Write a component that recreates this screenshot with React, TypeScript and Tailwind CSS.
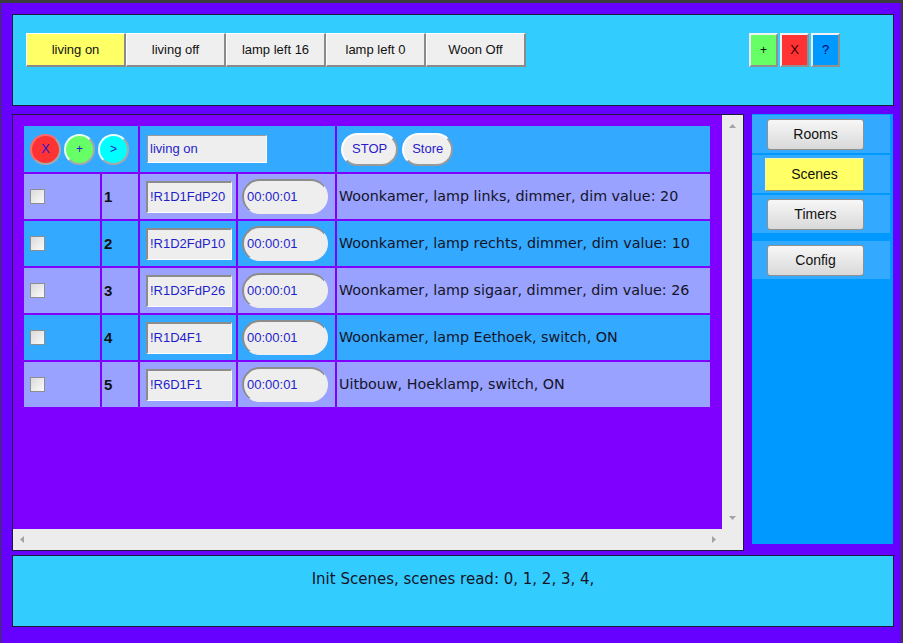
import React from "react";

const topButtons = [
  { label: "living on", active: true },
  { label: "living off", active: false },
  { label: "lamp left 16", active: false },
  { label: "lamp left 0", active: false },
  { label: "Woon Off", active: false },
];

const steps = [
  { nr: 1, code: "!R1D1FdP20", time: "00:00:01", text: "Woonkamer, lamp links, dimmer, dim value: 20" },
  { nr: 2, code: "!R1D2FdP10", time: "00:00:01", text: "Woonkamer, lamp rechts, dimmer, dim value: 10" },
  { nr: 3, code: "!R1D3FdP26", time: "00:00:01", text: "Woonkamer, lamp sigaar, dimmer, dim value: 26" },
  { nr: 4, code: "!R1D4F1", time: "00:00:01", text: "Woonkamer, lamp Eethoek, switch, ON" },
  { nr: 5, code: "!R6D1F1", time: "00:00:01", text: "Uitbouw, Hoeklamp, switch, ON" },
];

const arial = "font-['Liberation_Sans',Arial,sans-serif]";
const comic = "font-['DejaVu_Sans',sans-serif]";

const Arrow = ({ dir }: { dir: "up" | "down" | "left" | "right" }) => {
  const pts = {
    up: "0,4 3.5,0 7,4",
    down: "0,0 3.5,4 7,0",
    left: "4,0 0,3.5 4,7",
    right: "0,0 4,3.5 0,7",
  }[dir];
  const vertical = dir === "up" || dir === "down";
  return (
    <svg width={vertical ? 7 : 4} height={vertical ? 4 : 7} viewBox={vertical ? "0 0 7 4" : "0 0 4 7"}>
      <polygon points={pts} fill="#a3a3a3" />
    </svg>
  );
};

const SideButton = ({ label, active }: { label: string; active?: boolean }) =>
  active ? (
    <div className="w-[99px] h-[33px] flex items-center justify-center bg-[#ffff66] border-t border-l border-[#f4f4c0] border-b border-r border-b-[#9a9a60] border-r-[#9a9a60] text-[14px] text-[#111]">
      {label}
    </div>
  ) : (
    <div className="w-[97px] h-[31px] flex items-center justify-center rounded-[3px] border border-[#8f8f8f] bg-linear-to-b from-[#f7f7f7] to-[#d9d9d9] text-[14px] text-[#111]">
      {label}
    </div>
  );

export default function App() {
  return (
    <div className={`w-[903px] h-[643px] overflow-hidden bg-[#6600ff] border-t-[3px] border-l border-r-2 border-[#3c3c3c] pl-[11px] pt-[11px] ${arial}`}>
      {/* Top bar */}
      <div className="w-[882px] h-[92px] bg-[#33ccff] border border-[#1c1c3c] flex items-start pt-[18px] pl-[13px] pr-[53px]">
        <div className="flex">
          {topButtons.map((b) => (
            <div
              key={b.label}
              className={`w-[100px] h-[34px] flex items-center justify-center text-[13px] text-[#111] border-t border-l border-white border-b-2 border-r-2 border-b-[#8a8a8a] border-r-[#8a8a8a] ${
                b.active ? "bg-[#ffff66]" : "bg-[#efefef]"
              }`}
            >
              {b.label}
            </div>
          ))}
        </div>
        <div className="ml-auto flex gap-[2px]">
          <div className="w-[29px] h-[34px] flex items-center justify-center bg-[#66ff66] text-[12px] text-[#111] border-t-2 border-l-2 border-[#f2f2f2] border-b-2 border-r-2 border-b-[#909090] border-r-[#909090]">
            +
          </div>
          <div className="w-[29px] h-[34px] flex items-center justify-center bg-[#ff3333] text-[13px] text-[#3a0000] border-t-2 border-l-2 border-[#f2f2f2] border-b-2 border-r-2 border-b-[#909090] border-r-[#909090]">
            X
          </div>
          <div className="w-[29px] h-[34px] flex items-center justify-center bg-[#0099ff] text-[13px] text-[#000066] border-t-2 border-l-2 border-[#f2f2f2] border-b-2 border-r-2 border-b-[#909090] border-r-[#909090]">
            ?
          </div>
        </div>
      </div>

      {/* Middle */}
      <div className="mt-[8px] flex gap-[8px] items-start">
        <div className="w-[732px] h-[437px] border border-[#1c1c3c] flex flex-col">
          <div className="flex h-[414px]">
            <div className="w-[709px] bg-[#7f00ff] p-[11px]">
              <div className="grid grid-cols-[76px_36px_96px_97px_373px] gap-[2px]">
                {/* header row */}
                <div className="col-span-2 h-[46px] bg-[#33aaff] flex items-center pl-[6px] gap-[3px]">
                  <div className="w-[31px] h-[31px] rounded-full bg-[#ff3333] flex items-center justify-center text-[13px] text-[#2a1acc] border-t-2 border-l-2 border-[#ff6a6a] border-b-2 border-r-2 border-b-[#a8a8a8] border-r-[#a8a8a8]">
                    X
                  </div>
                  <div className="w-[31px] h-[31px] rounded-full bg-[#66ff66] flex items-center justify-center text-[12px] text-[#2a1acc] border-t-2 border-l-2 border-[#eaffea] border-b-2 border-r-2 border-b-[#a8a8a8] border-r-[#a8a8a8]">
                    +
                  </div>
                  <div className="w-[31px] h-[31px] rounded-full bg-[#00ffff] flex items-center justify-center text-[12px] text-[#2a1acc] border-t-2 border-l-2 border-[#eaffff] border-b-2 border-r-2 border-b-[#a8a8a8] border-r-[#a8a8a8]">
                    &gt;
                  </div>
                </div>
                <div className="col-span-2 bg-[#33aaff] flex items-center pl-[7px]">
                  <div className="w-[120px] h-[28px] bg-[#eeeeee] flex items-center pl-[2px] text-[13px] text-[#1f1fcc] border-t border-l border-[#9a9a9a] border-b border-r border-b-white border-r-white">
                    living on
                  </div>
                </div>
                <div className="bg-[#33aaff] flex items-center pl-[4px] gap-[4px]">
                  <div className="h-[33px] px-[9px] rounded-full bg-[#efefef] flex items-center text-[13px] text-[#2a1acc] border-t-2 border-l-2 border-white border-b-2 border-r-2 border-b-[#9a9a9a] border-r-[#9a9a9a]">
                    STOP
                  </div>
                  <div className="h-[33px] px-[8px] rounded-full bg-[#efefef] flex items-center text-[13px] text-[#2a1acc] border-t-2 border-l-2 border-white border-b-2 border-r-2 border-b-[#9a9a9a] border-r-[#9a9a9a]">
                    Store
                  </div>
                </div>

                {steps.map((s, i) => {
                  const bg = i % 2 === 0 ? "bg-[#9aa2ff]" : "bg-[#33aaff]";
                  return (
                    <React.Fragment key={s.nr}>
                      <div className={`h-[45px] ${bg} flex items-center pl-[6px]`}>
                        <div className="w-[15px] h-[15px] border border-[#8e8e8e] bg-linear-to-br from-[#dadada] to-[#fbfbfb]" />
                      </div>
                      <div className={`${bg} flex items-center pl-[2px] pt-[2px] text-[15px] font-bold text-[#111]`}>{s.nr}</div>
                      <div className={`${bg} flex items-center pl-[6px]`}>
                        <div className="w-[86px] h-[32px] bg-[#eeeeee] flex items-center pl-[2px] text-[13px] text-[#1f1fcc] border-t-2 border-l-2 border-[#8c8c8c] border-b border-r border-b-white border-r-white">
                          {s.code}
                        </div>
                      </div>
                      <div className={`${bg} flex items-center pl-[4px]`}>
                        <div className="w-[86px] h-[35px] rounded-full bg-[#eeeeee] flex items-center pl-[3px] text-[13px] text-[#1f1fcc] border-t-2 border-l-2 border-[#8c8c8c] border-b border-r border-b-[#eeeeee] border-r-[#eeeeee]">
                          {s.time}
                        </div>
                      </div>
                      <div className={`${bg} flex items-center pl-[2px] pt-[1px] text-[14.3px] text-[#141428] ${comic}`}>{s.text}</div>
                    </React.Fragment>
                  );
                })}
              </div>
            </div>
            <div className="w-[21px] bg-[#ececec] flex flex-col items-center justify-between pt-[9px] pb-[9px]">
              <Arrow dir="up" />
              <Arrow dir="down" />
            </div>
          </div>
          <div className="h-[21px] flex bg-[#ececec]">
            <div className="w-[709px] flex items-center justify-between pl-[7px] pr-[6px]">
              <Arrow dir="left" />
              <Arrow dir="right" />
            </div>
            <div className="w-[21px] bg-[#ececec]" />
          </div>
        </div>

        {/* Side menu */}
        <div className="w-[141px] h-[430px] bg-[#0099ff] pt-[1px] flex flex-col gap-[2px]">
          <div className="w-[138px] h-[38px] bg-[#33aaff] flex items-center pl-[15px]">
            <SideButton label="Rooms" />
          </div>
          <div className="w-[138px] h-[38px] bg-[#33aaff] flex items-center pl-[13px]">
            <SideButton label="Scenes" active />
          </div>
          <div className="w-[138px] h-[38px] bg-[#33aaff] flex items-center pl-[15px]">
            <SideButton label="Timers" />
          </div>
          <div className="mt-[6px] w-[138px] h-[38px] bg-[#33aaff] flex items-center pl-[15px]">
            <SideButton label="Config" />
          </div>
        </div>
      </div>

      {/* Status bar */}
      <div className={`mt-[4px] w-[882px] h-[72px] bg-[#33ccff] border border-[#1c1c3c] pt-[12px] text-center text-[15px] text-[#141428] ${comic}`}>
        Init Scenes, scenes read: 0, 1, 2, 3, 4,
      </div>
    </div>
  );
}
